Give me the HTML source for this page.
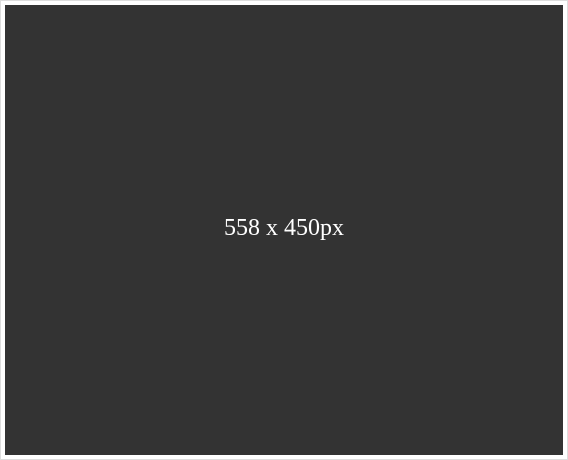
<!DOCTYPE html>
<html><head><style>
html,body{margin:0;padding:0;background:#fff;}
.wrap{position:absolute;left:0;top:0;width:566px;height:458px;border:1px solid #ddd;background:#fff;}
.box{position:absolute;left:4px;top:4px;width:558px;height:450px;background:#333;}
.t{position:absolute;left:0;right:0;top:209px;text-align:center;color:#fff;font-family:"Liberation Serif",serif;font-size:24px;line-height:28px;}
</style></head><body>
<div class="wrap"><div class="box"><div class="t">558 x 450px</div></div></div>
</body></html>
